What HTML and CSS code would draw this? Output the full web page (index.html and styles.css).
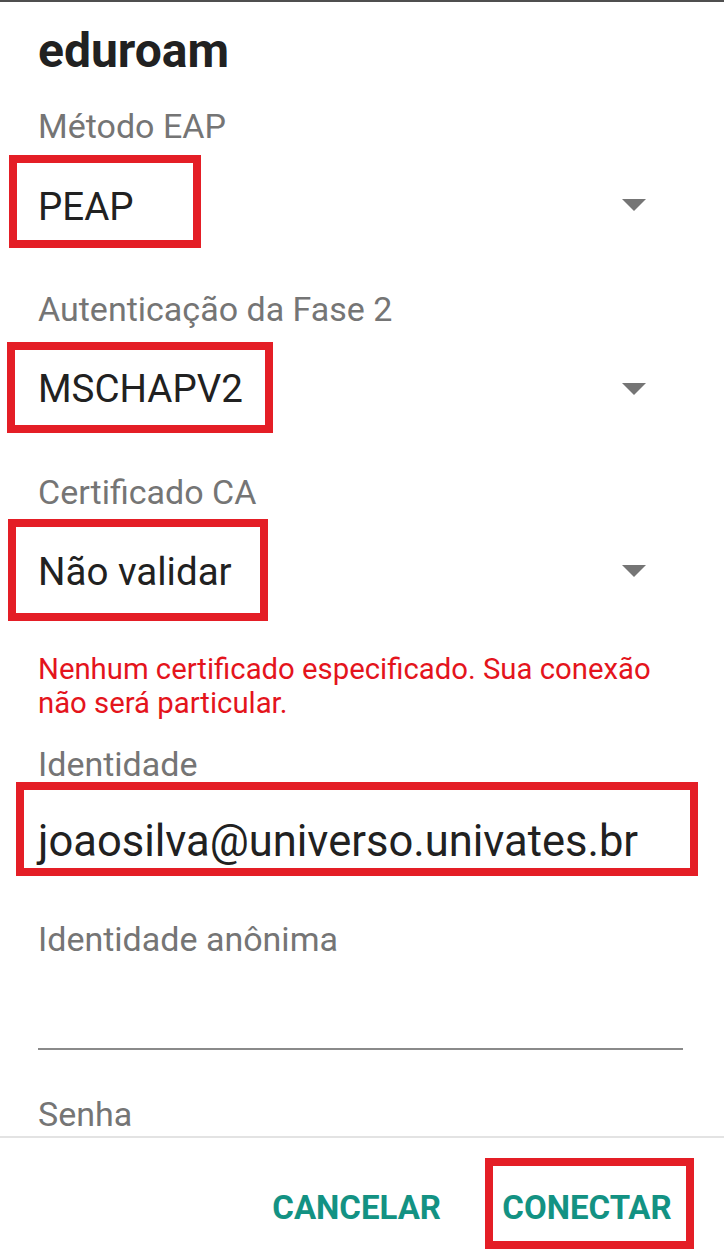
FILE: index.html
```html
<!DOCTYPE html>
<html lang="pt-BR">
<head>
    <meta charset="UTF-8">
    <meta name="viewport" content="width=device-width, initial-scale=1.0">
    <title>eduroam</title>
    <link rel="stylesheet" href="styles.css">
</head>
<body>
    <div class="dialog">
        <div class="content">
            <h1 class="title">eduroam</h1>

            <div class="field field-eap">
                <div class="label">Método EAP</div>
                <div class="select">
                    <span class="value mark mark-peap">PEAP</span>
                    <svg class="arrow" width="24" height="12" viewBox="0 0 24 12"><polygon points="0,0 24,0 12,12" fill="#757575"/></svg>
                </div>
            </div>

            <div class="field field-phase2">
                <div class="label">Autenticação da Fase 2</div>
                <div class="select">
                    <span class="value mark mark-mschap">MSCHAPV2</span>
                    <svg class="arrow" width="24" height="12" viewBox="0 0 24 12"><polygon points="0,0 24,0 12,12" fill="#757575"/></svg>
                </div>
            </div>

            <div class="field field-ca">
                <div class="label">Certificado CA</div>
                <div class="select">
                    <span class="value mark mark-ca">Não validar</span>
                    <svg class="arrow" width="24" height="12" viewBox="0 0 24 12"><polygon points="0,0 24,0 12,12" fill="#757575"/></svg>
                </div>
            </div>

            <p class="error">Nenhum certificado especificado. Sua conexão não será particular.</p>

            <div class="field field-identity">
                <div class="label">Identidade</div>
                <div class="value mark mark-identity">joaosilva@universo.univates.br</div>
            </div>

            <div class="field field-anon">
                <div class="label">Identidade anônima</div>
                <div class="blank-input"></div>
            </div>

            <div class="field field-pass">
                <div class="label">Senha</div>
            </div>
        </div>

        <div class="actions">
            <button class="btn">CANCELAR</button>
            <button class="btn mark mark-connect">CONECTAR</button>
        </div>
    </div>
</body>
</html>
```

FILE: styles.css
```css
/* dialog: Wi-Fi network settings */
* { margin: 0; padding: 0; box-sizing: border-box; }
body { font-family: Roboto, "Liberation Sans", sans-serif; background: #fff; color: #212121; }

.dialog { width: 724px; height: 1260px; border-top: 2px solid #4f4f4f; display: flex; flex-direction: column; }
.content { height: 1134px; overflow: hidden; padding: 21px 41px 0 38px; }

.title { font-size: 48px; line-height: 56px; font-weight: 700; color: #212121; }

.label { font-size: 34px; line-height: 40px; color: #757575; }
.field-eap .label { margin-top: 27px; }
.field-phase2 .label { margin-top: 41px; }
.field-ca .label { margin-top: 39px; }
.field-identity .label { margin-top: 24px; }
.field-anon .label { margin-top: 43px; }
.field-pass .label { margin-top: 44px; }

.select { display: flex; justify-content: space-between; align-items: center; }
.field-eap .select { margin-top: 9px; }
.field-phase2 .select { margin-top: 13px; }
.field-ca .select { margin-top: 7px; }
.arrow { margin: 2px 37px 0 0; flex: none; }
.field-eap .arrow { margin-top: 7px; }

.value { display: block; font-size: 38.5px; color: #212121; }

/* red highlight boxes drawn over the screenshot */
.mark { border: 8px solid #e41e26; }
.mark-peap { width: 192px; margin-left: -29px; padding: 11px 0 0 21px; line-height: 66px; }
.mark-mschap { width: 266px; margin-left: -31px; padding: 3px 0 0 23px; line-height: 72px; }
.mark-ca { width: 260px; margin-left: -30px; padding: 4px 0 0 22px; line-height: 82px; }
.mark-identity { width: 682px; margin: -2px 0 0 -22px; padding: 25px 0 0 14px; line-height: 53px; font-size: 43.5px; }

.error { margin-top: 31px; font-size: 29.3px; line-height: 34px; color: #e4141c; }

.blank-input { height: 91px; border-bottom: 2px solid #8a8a8a; }

.actions { flex: 1; border-top: 2px solid #e3e3e3; display: flex; justify-content: flex-end; align-items: flex-start; padding: 20px 30px 0 0; }
.btn { font-family: inherit; font-size: 33px; font-weight: 700; color: #139283; background: none; border: 8px solid transparent; padding: 8px 14px 0 9px; line-height: 67px; cursor: pointer; }
.btn + .btn { margin-left: 22px; }
.mark-connect { border-color: #e41e26; width: 209px; }
```
